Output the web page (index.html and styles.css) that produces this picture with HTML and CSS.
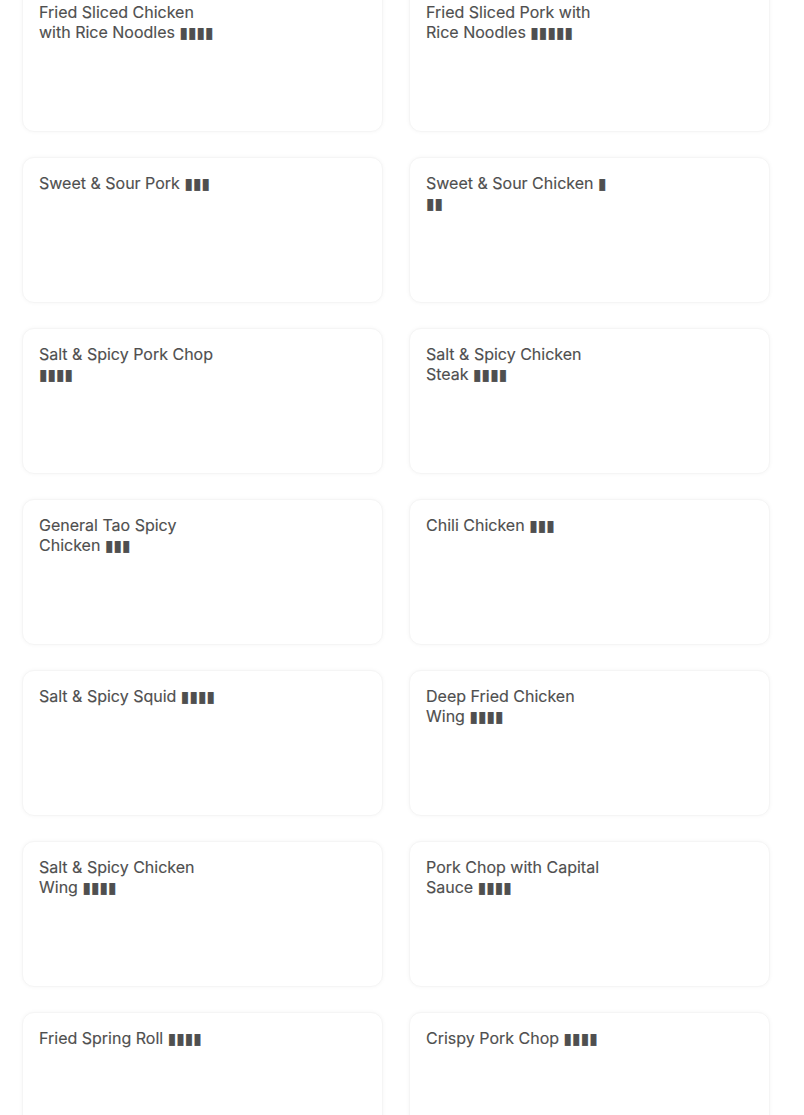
FILE: index.html
```html
<!DOCTYPE html>
<html>
<head>
<meta charset="utf-8">
<link rel="stylesheet" href="styles.css">
</head>
<body>
<div class="grid">
  <div class="card"><div class="name">Fried Sliced Chicken with Rice Noodles <span class="cjk">▮▮▮▮</span></div></div>
  <div class="card"><div class="name">Fried Sliced Pork with Rice Noodles <span class="cjk">▮▮▮▮▮</span></div></div>
  <div class="card"><div class="name">Sweet &amp; Sour Pork <span class="cjk">▮▮▮</span></div></div>
  <div class="card"><div class="name">Sweet &amp; Sour Chicken <span class="cjk">▮▮▮</span></div></div>
  <div class="card"><div class="name">Salt &amp; Spicy Pork Chop <span class="cjk">▮▮▮▮</span></div></div>
  <div class="card"><div class="name">Salt &amp; Spicy Chicken Steak <span class="cjk">▮▮▮▮</span></div></div>
  <div class="card"><div class="name">General Tao Spicy Chicken <span class="cjk">▮▮▮</span></div></div>
  <div class="card"><div class="name">Chili Chicken <span class="cjk">▮▮▮</span></div></div>
  <div class="card"><div class="name">Salt &amp; Spicy Squid <span class="cjk">▮▮▮▮</span></div></div>
  <div class="card"><div class="name">Deep Fried Chicken Wing <span class="cjk">▮▮▮▮</span></div></div>
  <div class="card"><div class="name">Salt &amp; Spicy Chicken Wing <span class="cjk">▮▮▮▮</span></div></div>
  <div class="card"><div class="name">Pork Chop with Capital Sauce <span class="cjk">▮▮▮▮</span></div></div>
  <div class="card"><div class="name">Fried Spring Roll <span class="cjk">▮▮▮▮</span></div></div>
  <div class="card"><div class="name">Crispy Pork Chop <span class="cjk">▮▮▮▮</span></div></div>
</div>
</body>
</html>
```

FILE: styles.css
```css
html, body {
  margin: 0;
  padding: 0;
  background: #ffffff;
}
body {
  font-family: Inter, Roboto, "Liberation Sans", sans-serif;
  overflow: hidden;
}
.grid {
  display: grid;
  grid-template-columns: 361px 361px;
  column-gap: 26px;
  row-gap: 25px;
  padding-left: 22px;
  margin-top: -14px;
}
.card {
  height: 146px;
  box-sizing: border-box;
  border: 1px solid #f5f5f5;
  border-radius: 12px;
  box-shadow: 0 0 4px rgba(0, 0, 0, 0.04);
  padding: 15px 16px;
  background: #fff;
}
.name {
  max-width: 182px;
  font-size: 16px;
  line-height: 20px;
  font-weight: 400;
  color: #4f4f4f;
  -webkit-text-stroke: 0.15px #4f4f4f;
}
.cjk {
  font-family: "DejaVu Sans", sans-serif;
  font-size: 15.5px;
  line-height: 1;
  line-break: anywhere;
  word-break: break-all;
}
```
